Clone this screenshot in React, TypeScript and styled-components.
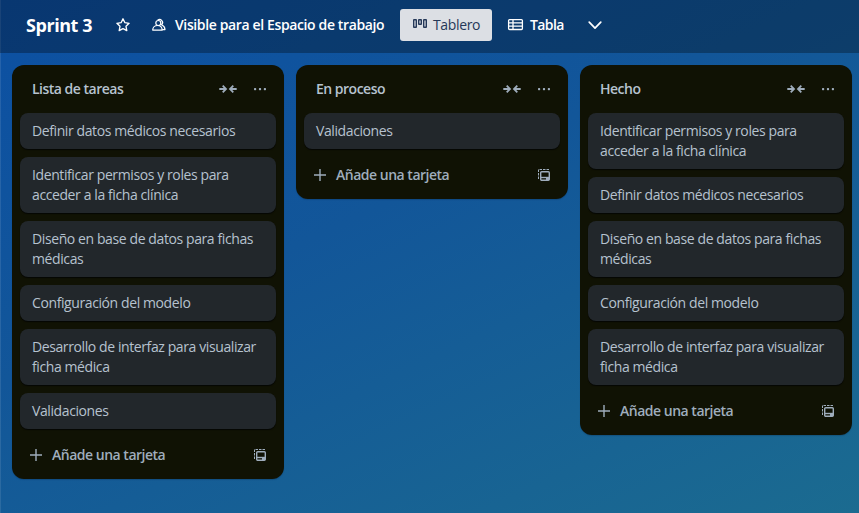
import React from "react";
import styled, { createGlobalStyle } from "styled-components";

const GlobalStyle = createGlobalStyle`
  * { box-sizing: border-box; }
  body {
    margin: 0;
    font-family: "Open Sans", "Noto Sans", sans-serif;
    font-size: 14px;
    line-height: 20px;
    color: #b6c2cf;
  }
  button { font: inherit; letter-spacing: inherit; color: inherit; background: none; border: 0; padding: 0; }
  svg { display: block; flex: none; }
`;

const Board = styled.div`
  height: 513px;
  overflow: hidden;
  background: linear-gradient(155deg, #0c50a3 0%, #125699 42%, #1b6b90 100%);
  box-shadow: inset 1px 0 rgba(255, 255, 255, 0.1);
`;

const Header = styled.header`
  display: flex;
  align-items: center;
  height: 53px;
  padding: 0 0 3px 26px;
  background: rgba(0, 0, 0, 0.3);
  color: #fff;
`;

const Title = styled.h1`
  margin: 0;
  width: 89px;
  font-size: 18px;
  line-height: 24px;
  font-weight: 700;
  letter-spacing: -0.45px;
  white-space: nowrap;
`;

const Visibility = styled.button`
  display: flex;
  align-items: center;
  gap: 8px;
  width: 249px;
  margin-left: 20px;
  font-weight: 600;
  letter-spacing: -0.37px;
  white-space: nowrap;
`;

const ViewButton = styled.button<{ $active?: boolean }>`
  display: flex;
  align-items: center;
  gap: ${(p) => (p.$active ? 5 : 6)}px;
  height: 32px;
  width: ${(p) => (p.$active ? 92 : 95)}px;
  padding-left: ${(p) => (p.$active ? 12 : 15)}px;
  border-radius: 3px;
  background: ${(p) => (p.$active ? "#dcdfe4" : "transparent")};
  color: ${(p) => (p.$active ? "#253858" : "#fff")};
  font-weight: ${(p) => (p.$active ? 400 : 600)};
  letter-spacing: ${(p) => (p.$active ? -0.35 : -0.6)}px;
`;

const Lists = styled.main`
  display: flex;
  align-items: flex-start;
  gap: 12px;
  padding: 12px;
`;

const List = styled.section`
  flex: none;
  width: 272px;
  padding: 8px;
  border-radius: 12px;
  background: #101204;
  box-shadow: 0 1px 1px rgba(9, 30, 66, 0.25);
`;

const ListHeader = styled.div`
  display: flex;
  align-items: center;
  gap: 15px;
  height: 32px;
  padding: 0 8px 0 12px;
  margin-bottom: 8px;
  color: #9fadbc;
`;

const ListTitle = styled.h2`
  flex: 1;
  margin: 0;
  font-size: 14px;
  font-weight: 600;
  letter-spacing: -0.5px;
  color: #b6c2cf;
`;

const Cards = styled.div`
  display: flex;
  flex-direction: column;
  gap: 8px;
`;

const Card = styled.article`
  padding: 8px 12px;
  border-radius: 8px;
  background: #22272b;
  letter-spacing: -0.4px;
  white-space: pre-line;
  box-shadow: 0 1px 1px rgba(3, 4, 4, 0.8);
`;

const ListFooter = styled.div`
  display: flex;
  align-items: center;
  justify-content: space-between;
  height: 32px;
  margin-top: 10px;
  padding: 0 8px;
  color: #9fadbc;
`;

const AddButton = styled.button`
  display: flex;
  align-items: center;
  gap: 8px;
  font-weight: 600;
  letter-spacing: -0.49px;
`;

const StarIcon = () => (
  <svg width="16" height="16" viewBox="0 0 16 16" fill="none" stroke="currentColor" strokeWidth="1.35" strokeLinejoin="round">
    <path d="m8 1.800 1.900 3.900 4.200.6-3.100 3 .8 4.300L8 11.600l-3.800 2 .8-4.300-3.100-3 4.200-.6z" />
  </svg>
);

const PeopleIcon = () => (
  <svg width="16" height="16" viewBox="0 0 16 16" fill="none" stroke="currentColor" strokeWidth="1.2" strokeLinejoin="round">
    <path d="M6.600 3.300a2.900 2.900 0 1 1 3.900 4.500c2.100.9 3.400 2.600 3.500 4.800h-2.800" />
    <circle cx="7.300" cy="6" r="2.500" />
    <path d="M1.700 13.100C1.800 10.300 4 8.500 6.500 8.500s4.600 1.800 4.700 4.600z" />
  </svg>
);

const BoardIcon = () => (
  <svg width="16" height="16" viewBox="0 0 16 16" fill="none" stroke="currentColor" strokeWidth="1.4">
    <rect x="1.700" y="2.700" width="2.600" height="7.600" rx=".3" />
    <rect x="6.700" y="2.700" width="2.600" height="4.600" rx=".3" />
    <rect x="11.700" y="2.700" width="2.600" height="7.600" rx=".3" />
  </svg>
);

const TableIcon = () => (
  <svg width="17" height="16" viewBox="0 0 17 16" fill="none" stroke="currentColor" strokeWidth="1.3">
    <rect x="1.600" y="2.600" width="13.800" height="9.900" rx="1" />
    <path d="M1.600 5.900h13.800M1.600 9.200h13.800M6 2.600v9.900" />
  </svg>
);

const ChevronIcon = () => (
  <svg width="16" height="16" viewBox="0 0 16 16" fill="none" stroke="currentColor" strokeWidth="1.7" strokeLinecap="round" strokeLinejoin="round">
    <path d="m2.200 5.200 5.800 6 5.800-6" />
  </svg>
);

const CollapseIcon = () => (
  <svg width="18" height="16" viewBox="0 0 18 16" fill="none" stroke="currentColor" strokeWidth="1.800">
    <path d="M.3 8h6M3.700 4.700 7 8l-3.300 3.300M17.700 8h-6M14.300 4.700 11 8l3.300 3.300" />
  </svg>
);

const MoreIcon = () => (
  <svg width="16" height="16" viewBox="0 0 16 16" fill="currentColor">
    <rect x="2" y="7" width="2.200" height="2.200" rx=".7" />
    <rect x="6.900" y="7" width="2.200" height="2.200" rx=".7" />
    <rect x="11.800" y="7" width="2.200" height="2.200" rx=".7" />
  </svg>
);

const PlusIcon = () => (
  <svg width="16" height="16" viewBox="0 0 16 16" fill="none" stroke="currentColor" strokeWidth="1.400">
    <path d="M8 2v12M2 8h12" />
  </svg>
);

const TemplateIcon = () => (
  <svg width="16" height="16" viewBox="0 0 16 16" fill="none" stroke="currentColor">
    <path d="M2.500 12V2.500H13" strokeDasharray="2.500 1" />
    <rect x="4.700" y="4.700" width="8.600" height="8.600" rx="1" strokeWidth="1.400" />
    <path d="M4.700 10.500h8.600" strokeWidth="1.400" />
    <path d="M10 12h3.300" strokeWidth="2.200" />
  </svg>
);

const PERMISSIONS = "Identificar permisos y roles para\nacceder a la ficha clínica";
const DATA = "Definir datos médicos necesarios";
const DATABASE = "Diseño en base de datos para fichas\nmédicas";
const MODEL = "Configuración del modelo";
const INTERFACE = "Desarrollo de interfaz para visualizar\nficha médica";
const VALIDATION = "Validaciones";

const lists = [
  { title: "Lista de tareas", cards: [DATA, PERMISSIONS, DATABASE, MODEL, INTERFACE, VALIDATION] },
  { title: "En proceso", cards: [VALIDATION] },
  { title: "Hecho", cards: [PERMISSIONS, DATA, DATABASE, MODEL, INTERFACE] },
];

export default function App() {
  return (
    <Board>
      <GlobalStyle />
      <Header>
        <Title>Sprint 3</Title>
        <StarIcon />
        <Visibility><PeopleIcon />Visible para el Espacio de trabajo</Visibility>
        <ViewButton $active><BoardIcon />Tablero</ViewButton>
        <ViewButton><TableIcon />Tabla</ViewButton>
        <ChevronIcon />
      </Header>
      <Lists>
        {lists.map((list) => (
          <List key={list.title}>
            <ListHeader>
              <ListTitle>{list.title}</ListTitle>
              <CollapseIcon />
              <MoreIcon />
            </ListHeader>
            <Cards>
              {list.cards.map((card) => <Card key={card}>{card}</Card>)}
            </Cards>
            <ListFooter>
              <AddButton><PlusIcon />Añade una tarjeta</AddButton>
              <TemplateIcon />
            </ListFooter>
          </List>
        ))}
      </Lists>
    </Board>
  );
}
